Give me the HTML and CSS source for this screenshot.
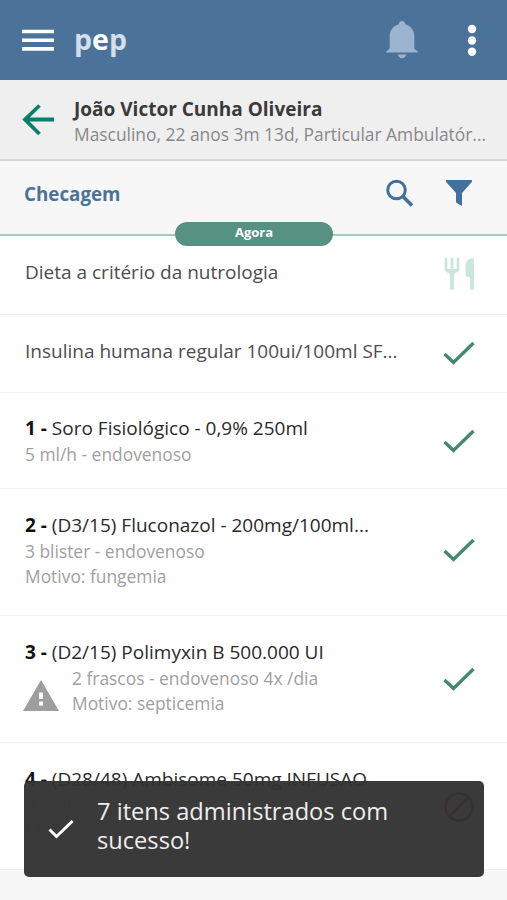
FILE: index.html
```html
<!DOCTYPE html>
<html lang="pt-BR">
<head>
  <meta charset="UTF-8">
  <meta name="viewport" content="width=device-width, initial-scale=1.0">
  <title>pep - Checagem</title>
  <link rel="stylesheet" href="styles.css">
</head>
<body>

<header class="topbar">
  <svg class="menu" width="32" height="22" viewBox="0 0 32 22"><path d="M0 2.500h32M0 11.200h32M0 19.900h32" stroke="#fff" stroke-width="3.6"/></svg>
  <h1 class="logo">p<span>e</span>p</h1>
  <svg class="bell" width="34" height="40" viewBox="0 0 34 40" fill="#9bb4d0">
    <path d="M17 1c2 0 3.200 1.400 3.200 3.200C26 5.700 29.300 10.500 29.300 16v12c0 1.500 3.700 2.800 3.700 4.500H1C1 30.800 4.700 29.500 4.700 28V16C4.700 10.500 8 5.700 13.800 4.200 13.800 2.400 15 1 17 1z"/>
    <path d="M13 34.500h8c0 2-1.700 3.700-4 3.700s-4-1.700-4-3.700z"/>
  </svg>
  <svg class="more" width="10" height="32" viewBox="0 0 10 32" fill="#fff"><circle cx="5" cy="5" r="4.200"/><circle cx="5" cy="16.500" r="4.200"/><circle cx="5" cy="27.800" r="4.200"/></svg>
</header>

<section class="patient">
  <svg class="back" width="32" height="32" viewBox="0 0 32 32" fill="none" stroke="#087f68" stroke-width="3.800"><path d="M17.500 1.500L3 15.500l14.500 14.500M2.500 15.500H32"/></svg>
  <div class="patient-info">
    <h2>João Victor Cunha Oliveira</h2>
    <p>Masculino, 22 anos 3m 13d, Particular Ambulatór...</p>
  </div>
</section>

<section class="toolbar">
  <h3>Checagem</h3>
  <svg class="search" width="28" height="28" viewBox="0 0 28 28" fill="none" stroke="#41709f"><circle cx="11.500" cy="11" r="8.800" stroke-width="3"/><path d="M17.700 17.200L27 26.500" stroke-width="3.600"/></svg>
  <svg class="filter" width="28" height="28" viewBox="0 0 28 28" fill="#41709f"><path d="M1.500 1h25c.8 0 .8 1.300.3 2L17 14v13l-6-3.500V14L1.200 3C.7 2.300.7 1 1.500 1z"/></svg>
  <span class="now">Agora</span>
</section>

<main class="list">
  <div class="item single first">
    <div class="text">
      <p class="name">Dieta a critério da nutrologia</p>
    </div>
    <svg class="food" width="32" height="34" viewBox="0 0 32 34">
      <path d="M3 2v9.500q0 3 3 3h6q3 0 3-3V2M9 2v12" fill="none" stroke="#cae6de" stroke-width="2.800" stroke-linecap="round"/>
      <path d="M3 12h12l-4 5.500v14q0 1.500-2 1.500t-2-1.500v-14z" fill="#cae6de"/>
      <path d="M31 2.500v29q0 1.500-2 1.500t-2-1.500V20h-2.500q-2 0-2-2V9q0-6.500 6.500-8 2 0 2 1.500z" fill="#cae6de"/>
    </svg>
  </div>

  <div class="item single">
    <div class="text">
      <p class="name">Insulina humana regular 100ui/100ml SF...</p>
    </div>
    <svg class="check" width="32" height="24" viewBox="0 0 32 24"><path d="M1.500 13l9 8.500L30.500 2"/></svg>
  </div>

  <div class="item">
    <div class="text">
      <p class="name dark"><b>1 -</b> Soro Fisiológico - 0,9% 250ml</p>
      <p class="detail">5 ml/h - endovenoso</p>
    </div>
    <svg class="check" width="32" height="24" viewBox="0 0 32 24"><path d="M1.500 13l9 8.500L30.500 2"/></svg>
  </div>

  <div class="item tall">
    <div class="text">
      <p class="name dark"><b>2 -</b> (D3/15) Fluconazol - 200mg/100ml...</p>
      <p class="detail">3 blister - endovenoso</p>
      <p class="detail">Motivo: fungemia</p>
    </div>
    <svg class="check" width="32" height="24" viewBox="0 0 32 24"><path d="M1.500 13l9 8.500L30.500 2"/></svg>
  </div>

  <div class="item tall with-alert">
    <div class="text">
      <p class="name dark"><b>3 -</b> (D2/15) Polimyxin B 500.000 UI</p>
      <div class="alert">
        <svg class="warning" width="36" height="31" viewBox="0 0 36 31"><path d="M18 0l18 31H0z" fill="#9e9e9e"/><path d="M18 12.500v6.500M18 21.500v4" stroke="#fff" stroke-width="3.800"/></svg>
        <div>
          <p class="detail">2 frascos - endovenoso 4x /dia</p>
          <p class="detail">Motivo: septicemia</p>
        </div>
      </div>
    </div>
    <svg class="check" width="32" height="24" viewBox="0 0 32 24"><path d="M1.500 13l9 8.500L30.500 2"/></svg>
  </div>

  <div class="item tall">
    <div class="text">
      <p class="name dark"><b>4 -</b> (D28/48) Ambisome 50mg INFUSAO</p>
      <p class="detail faded">3 blister</p>
      <p class="detail faded">Motivo</p>
    </div>
    <svg class="denied" width="32" height="32" viewBox="0 0 32 32" fill="none" stroke="#8c1a10" stroke-width="2.600"><circle cx="16" cy="16" r="13.500"/><path d="M6.500 25.500l19-19"/></svg>
  </div>
</main>

<div class="toast">
  <svg width="26" height="20" viewBox="0 0 26 20" fill="none" stroke="#fff" stroke-width="3"><path d="M1.500 10.500l7 7L24.500 2"/></svg>
  <p>7 itens administrados com sucesso!</p>
</div>

</body>
</html>
```
FILE: styles.css
```css
* {
  box-sizing: border-box;
}
body {
  font-family: "Open Sans", sans-serif;
  background-color: #f7f7f7;
  margin: 0;
  height: 900px;
  overflow: hidden;
}
h1, h2, h3, p {
  margin: 0;
}
svg {
  display: block;
  flex-shrink: 0;
}
.topbar {
  background: #4b7399;
  height: 80px;
  padding: 0 30px 0 22px;
  display: flex;
  align-items: center;
}
.logo {
  color: #d5deea;
  font-size: 28.500px;
  line-height: 40px;
  margin: 0 auto 2px 20px;
}
.logo span {
  color: #fff;
}
.more {
  margin-left: 48px;
}
.patient {
  background: #efefef;
  height: 81px;
  border-bottom: 2px solid #d6d6d6;
  padding-left: 22px;
  display: flex;
  align-items: center;
  white-space: nowrap;
}
.patient-info {
  margin: 5px 0 0 20px;
}
.patient h2 {
  color: #3a3a3a;
  font-size: 19px;
  line-height: 25px;
}
.patient p {
  color: #888;
  font-size: 17.400px;
  line-height: 25px;
}
.toolbar {
  position: relative;
  height: 75px;
  padding: 18px 34px 0 24px;
  border-bottom: 2px solid #a5c9bd;
  display: flex;
  align-items: flex-start;
}
.toolbar h3 {
  color: #4b7399;
  font-size: 18.800px;
  line-height: 30px;
  margin-right: auto;
}
.filter {
  margin-left: 32px;
}
.now {
  position: absolute;
  left: 175px;
  bottom: -12px;
  width: 158px;
  height: 24px;
  border-radius: 12px;
  background: #579181;
  color: #fff;
  font-size: 13px;
  font-weight: bold;
  line-height: 21px;
  text-align: center;
}
.list {
  background: #fff;
}
.item {
  height: 96px;
  padding: 22px 32px 0 25px;
  border-bottom: 1px solid #f0f0f0;
  display: flex;
  align-items: flex-start;
  justify-content: space-between;
  white-space: nowrap;
}
.item.single {
  height: 78px;
}
.item.first {
  height: 79px;
}
.item.tall {
  height: 127px;
}
.single .text, .tall .text {
  padding-top: 1px;
}
.name {
  color: #4d4d4d;
  font-size: 19px;
  line-height: 27px;
}
.name.dark {
  color: #2a2a2a;
}
.name b {
  color: #111;
}
.detail {
  color: #a0a0a0;
  font-size: 17.400px;
  line-height: 25px;
}
.detail.faded {
  color: #d0d0d0;
}
.check {
  fill: none;
  stroke: #43886f;
  stroke-width: 3.400;
  margin-top: 14px;
}
.item.single .check {
  margin-top: 4px;
}
.tall .check {
  margin-top: 27px;
}
.with-alert .check {
  margin-top: 29px;
}
.food {
  margin-top: -1px;
}
.denied {
  margin-top: 26px;
}
.alert {
  display: flex;
  align-items: center;
  gap: 13px;
  margin-left: -2px;
}
.warning {
  margin-top: 9px;
}
.toast {
  position: absolute;
  left: 24px;
  top: 781px;
  width: 460px;
  height: 96px;
  border-radius: 5px;
  background: rgba(50, 50, 50, 0.96);
  color: #eee;
  padding: 0 70px 7px 24px;
  display: flex;
  align-items: center;
  gap: 23px;
}
.toast svg {
  margin-top: 6px;
}
.toast p {
  font-size: 23.650px;
  line-height: 29px;
}
```
